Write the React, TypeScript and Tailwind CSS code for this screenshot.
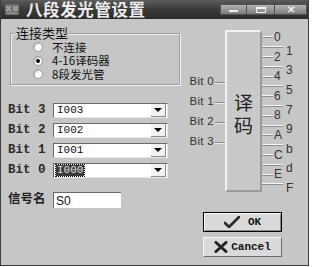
import React from "react";

const cjk = { fontFamily: '"Noto Sans CJK SC", "Noto Sans", sans-serif' };
const mono = { fontFamily: '"Liberation Mono", "Courier New", monospace' };
const sans = { fontFamily: '"Liberation Sans", Arial, sans-serif' };

function Radio({ checked, label }: { checked?: boolean; label: string }) {
  return (
    <div className="h-[13.5px] flex items-center">
      <div className="ml-[22px] w-[10px] h-[10px] rounded-full bg-white border border-[#9a9a9a] shadow-[inset_1px_1px_1px_#bdbdbd] flex items-center justify-center">
        {checked && <div className="w-[4px] h-[4px] rounded-full bg-black" />}
      </div>
      <span className="block ml-[9px] text-[11.5px] leading-[13px] h-[13px] text-[#111]" style={cjk}>
        {label}
      </span>
    </div>
  );
}

function Combo({ label, value, focused }: { label: string; value: string; focused?: boolean }) {
  return (
    <div className="h-[15px] flex items-center">
      <div className="w-[52px] pl-[7px] text-[12.5px] font-bold text-[#2a2a2a] leading-none" style={mono}>
        {label}
      </div>
      <div className="w-[115px] h-[15px] bg-white border-t border-l border-[#6a6a6a] border-b border-r border-b-[#e8e8e8] border-r-[#e8e8e8] flex items-center">
        <div className="flex-1 pl-[2px] flex items-center">
          <span
            className={
              "text-[11px] leading-[11px] px-[1px] " +
              (focused ? "bg-[#3a3a3a] text-[#e0e0e0] outline outline-1 outline-dotted outline-black" : "text-[#111]")
            }
            style={mono}
          >
            {value}
          </span>
        </div>
        <div className="w-[15px] h-[13px] mr-[1px] bg-[#f2f2f2] border-b border-r border-[#8a8a8a] flex items-center justify-center">
          <div className="w-0 h-0 border-l-[4px] border-r-[4px] border-t-[4px] border-l-transparent border-r-transparent border-t-black" />
        </div>
      </div>
    </div>
  );
}

export default function App() {
  const outs = ["0", "1", "2", "3", "4", "5", "6", "7", "8", "9", "A", "b", "C", "d", "E", "F"];
  return (
    <div className="w-[312px] h-[267px] bg-white overflow-hidden">
      <div className="w-[309px] h-[266px] flex flex-col bg-[#c6c6c6] border-l border-r border-b border-[#3c3c3c]">
        {/* Title bar */}
        <div className="h-[19px] shrink-0 flex items-center bg-gradient-to-b from-[#5c5c5c] via-[#3a3a3a] to-[#2c2c2c]">
          <svg width="17" height="15" viewBox="0 0 17 15" className="ml-[3px]">
            <rect x="1" y="2" width="14" height="11" fill="#6e6e6e" />
            <path d="M2 4 L7 9 M7 4 L2 9" stroke="#a8a8a8" strokeWidth="1.5" />
            <rect x="9" y="4" width="5" height="5" fill="#9a9a9a" />
            <rect x="3" y="10" width="10" height="2" fill="#8a8a8a" />
          </svg>
          <span className="block ml-[5px] text-[16.5px] font-bold leading-[19px] h-[19px] text-[#ececec] tracking-[0.6px]" style={cjk}>
            八段发光管设置
          </span>
          <div className="ml-auto mr-[1px] flex h-[11px]">
            <div className="w-[27px] h-[11px] border border-[#505050] bg-gradient-to-b from-[#b4b4b4] to-[#7c7c7c] flex items-end justify-center pb-[2px]">
              <div className="w-[9px] h-[2px] bg-[#f0f0f0]" />
            </div>
            <div className="w-[28px] h-[11px] border border-[#505050] border-l-0 bg-gradient-to-b from-[#b4b4b4] to-[#7c7c7c] flex items-center justify-center">
              <div className="w-[10px] h-[6px] border border-[#f0f0f0] border-t-2" />
            </div>
            <div className="w-[32px] h-[11px] border border-[#505050] border-l-0 bg-gradient-to-b from-[#b4b4b4] to-[#7c7c7c] flex items-center justify-center">
              <span className="text-[10px] leading-none font-bold text-[#f0f0f0]" style={sans}>
                ✕
              </span>
            </div>
          </div>
        </div>

        {/* Body */}
        <div className="flex flex-1">
          {/* Left column */}
          <div className="w-[184px] shrink-0 flex flex-col">
            <div className="relative mt-[14px] ml-[9px] w-[170px] h-[52px] border border-[#9c9c9c] shadow-[inset_1px_1px_0_#f4f4f4,1px_1px_0_#f4f4f4] pt-[6.5px]">
              <span
                className="absolute -top-[8px] left-[4px] bg-[#c6c6c6] px-[1px] text-[13px] leading-[14px] text-[#111]"
                style={cjk}
              >
                连接类型
              </span>
              <Radio label="不连接" />
              <Radio checked label="4-16译码器" />
              <Radio label="8段发光管" />
            </div>

            <div className="mt-[18px] flex flex-col gap-[5px]">
              <Combo label="Bit 3" value="I003" />
              <Combo label="Bit 2" value="I002" />
              <Combo label="Bit 1" value="I001" />
              <Combo label="Bit 0" value="I000" focused />
            </div>

            <div className="mt-[14px] flex items-center h-[16px]">
              <div className="w-[52px] pl-[7px] text-[12.5px] font-bold text-[#222] leading-[14px] -translate-y-[2px]" style={cjk}>
                信号名
              </div>
              <div className="w-[68px] h-[16px] bg-white border-t border-l border-[#6a6a6a] flex items-center pl-[2px]">
                <span className="text-[12px] leading-none text-[#111]" style={sans}>
                  S0
                </span>
              </div>
            </div>
          </div>

          {/* Right column */}
          <div className="flex flex-col">
            <div className="mt-[11px] flex">
              {/* inputs */}
              <div className="w-[40px] pt-[42px] flex flex-col">
                {[0, 1, 2, 3].map((i) => (
                  <div key={i} className="h-[20px] flex items-center justify-end">
                    <span className="text-[11.5px] leading-none text-[#333] tracking-[0.3px]" style={sans}>
                      Bit {i}
                    </span>
                    <div className="ml-[1px] w-[10px] h-[1px] bg-[#8a8a8a] shadow-[0_1px_0_#ececec]" />
                  </div>
                ))}
              </div>
              {/* box */}
              <div className="w-[37px] h-[162px] bg-[#c9c9c9] border-2 border-t-[#f2f2f2] border-l-[#f2f2f2] border-r-[#9a9a9a] border-b-[#9a9a9a] flex flex-col items-center pt-[59px] gap-[1px]">
                <span className="block h-[22px] text-[19px] leading-[22px] text-[#222]" style={cjk}>
                  译
                </span>
                <span className="block h-[22px] text-[19px] leading-[22px] text-[#222]" style={cjk}>
                  码
                </span>
              </div>
              {/* outputs */}
              <div className="pt-[2.1px] flex flex-col">
                {outs.map((o, i) => (
                  <div key={o} className="h-[9.8px] flex items-center">
                    <div
                      className={
                        "h-[1px] bg-[#f6f6f6] shadow-[0_1px_0_#8e8e8e] " + (i % 2 === 0 ? "w-[11px]" : "w-[21px]")
                      }
                    />
                    <span
                      className={
                        "text-[12px] leading-none text-[#333] " +
                        (i % 2 === 0 ? "ml-[1px]" : "ml-[3px] translate-y-[4px]")
                      }
                      style={sans}
                    >
                      {o}
                    </span>
                  </div>
                ))}
              </div>
            </div>

            {/* buttons */}
            <div className="mt-[20px] ml-[18px] flex flex-col gap-[5px]">
              <div className="w-[79px] h-[20px] border border-black bg-[#dadada] shadow-[inset_1px_1px_0_#ffffff,inset_-1px_-1px_0_#8a8a8a] flex items-center justify-center gap-[8px]">
                <svg width="16" height="12" viewBox="0 0 16 12">
                  <path d="M1 7 L5 11 L15 1" fill="none" stroke="#2a2a2a" strokeWidth="2.6" strokeLinecap="round" strokeLinejoin="round" />
                </svg>
                <span className="text-[11px] font-bold leading-none text-[#111]" style={mono}>
                  OK
                </span>
              </div>
              <div className="w-[79px] h-[20px] border border-t-[#f4f4f4] border-l-[#f4f4f4] border-r-[#6a6a6a] border-b-[#6a6a6a] bg-[#dadada] flex items-center justify-center gap-[3px]">
                <svg width="14" height="12" viewBox="0 0 14 12">
                  <path d="M2 1.5 L12 10.5 M12 1.5 L2 10.5" fill="none" stroke="#222" strokeWidth="3" strokeLinecap="round" />
                </svg>
                <span className="text-[11px] font-bold leading-none text-[#111]" style={mono}>
                  Cancel
                </span>
              </div>
            </div>
          </div>
        </div>
      </div>
    </div>
  );
}
